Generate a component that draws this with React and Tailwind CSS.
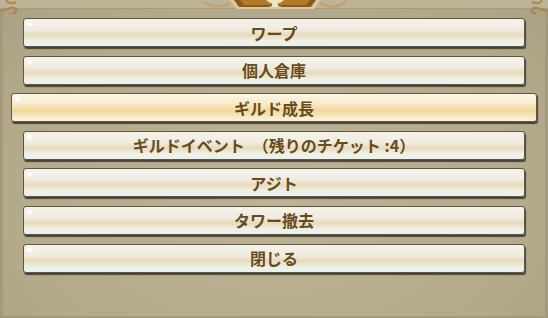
import React from "react";

const items = [
  { label: "ワープ" },
  { label: "個人倉庫" },
  { label: "ギルド成長", selected: true },
  { label: "ギルドイベント　（残りのチケット :4）" },
  { label: "アジト" },
  { label: "タワー撤去" },
  { label: "閉じる" },
];

function Btn({ label, selected }) {
  return (
    <div className={selected ? "px-[11px]" : "px-[23px]"}>
      <div
        className={
          "relative h-[29px] rounded-[3px] border border-[#5e5646] shadow-[1px_2px_1px_rgba(40,32,20,0.75)] flex items-center justify-center " +
          (selected
            ? "bg-[linear-gradient(180deg,#fbf6e6_0%,#f8eccb_35%,#f1d999_62%,#f6e8c4_82%,#fbf4df_100%)]"
            : "bg-[linear-gradient(180deg,#f5f2ea_0%,#f1ece0_38%,#e8dbbc_60%,#eef0e6_80%,#eaf2ee_100%)]")
        }
      >
        <span className="absolute left-[3px] top-[3px] w-[5px] h-[4px] rounded-full bg-white shadow-[0_0_2px_white]" />
        <span
          className="text-[16px] font-bold text-[#684b1c] leading-none"
          style={{ fontFamily: '"Noto Sans CJK JP", "Noto Sans", sans-serif' }}
        >
          {label}
        </span>
      </div>
    </div>
  );
}

export default function App() {
  return (
    <div className="relative w-[548px] h-[318px] overflow-hidden bg-[#b5ab8e] bg-[radial-gradient(ellipse_at_50%_60%,#bcb396_0%,#b3a98b_70%,#aaa083_100%)]">
      {/* frame edges */}
      <div className="absolute inset-0 border-l-[3px] border-r-[3px] border-b-[2px] border-[#a39a7e] pointer-events-none" />
      <div className="absolute left-0 right-0 top-0 h-[9px] bg-[#bdb498] border-b border-[#a59c80]" />
      {/* top center ornament */}
      <svg className="absolute left-[200px] top-0" width="150" height="14" viewBox="0 0 150 14">
        <path d="M4 1 C10 8 22 8 30 3" stroke="#c9a06a" strokeWidth="2.5" fill="none" />
        <path d="M146 1 C140 8 128 8 120 3" stroke="#c9a06a" strokeWidth="2.5" fill="none" />
        <path d="M30 0 L36 9 L114 9 L120 0 Z" fill="#dcc9a2" />
        <path d="M34 0 L39 7 L111 7 L116 0 Z" fill="#8a5a1c" />
        <path d="M40 0 L44 5 L106 5 L110 0 Z" fill="#b07a2c" />
        <path d="M66 0 L84 0 L80 3 L78 3 L78 6 L82 7 L68 7 L72 6 L72 3 L70 3 Z" fill="#f3e3c0" />
      </svg>
      {/* corner ornaments */}
      <svg className="absolute left-0 top-0" width="22" height="16" viewBox="0 0 22 16">
        <path d="M0 10 C6 12 10 6 14 8 C18 10 16 14 12 13" stroke="#b08552" strokeWidth="2.2" fill="none" />
        <path d="M6 0 C8 4 12 4 16 2" stroke="#b08552" strokeWidth="2" fill="none" />
      </svg>
      <svg className="absolute right-0 top-0" width="22" height="16" viewBox="0 0 22 16">
        <path d="M22 10 C16 12 12 6 8 8 C4 10 6 14 10 13" stroke="#b08552" strokeWidth="2.2" fill="none" />
        <path d="M16 0 C14 4 10 4 6 2" stroke="#b08552" strokeWidth="2" fill="none" />
      </svg>
      <div className="relative pt-[18px] flex flex-col gap-[8.6px]">
        {items.map((it) => (
          <Btn key={it.label} {...it} />
        ))}
      </div>
    </div>
  );
}
